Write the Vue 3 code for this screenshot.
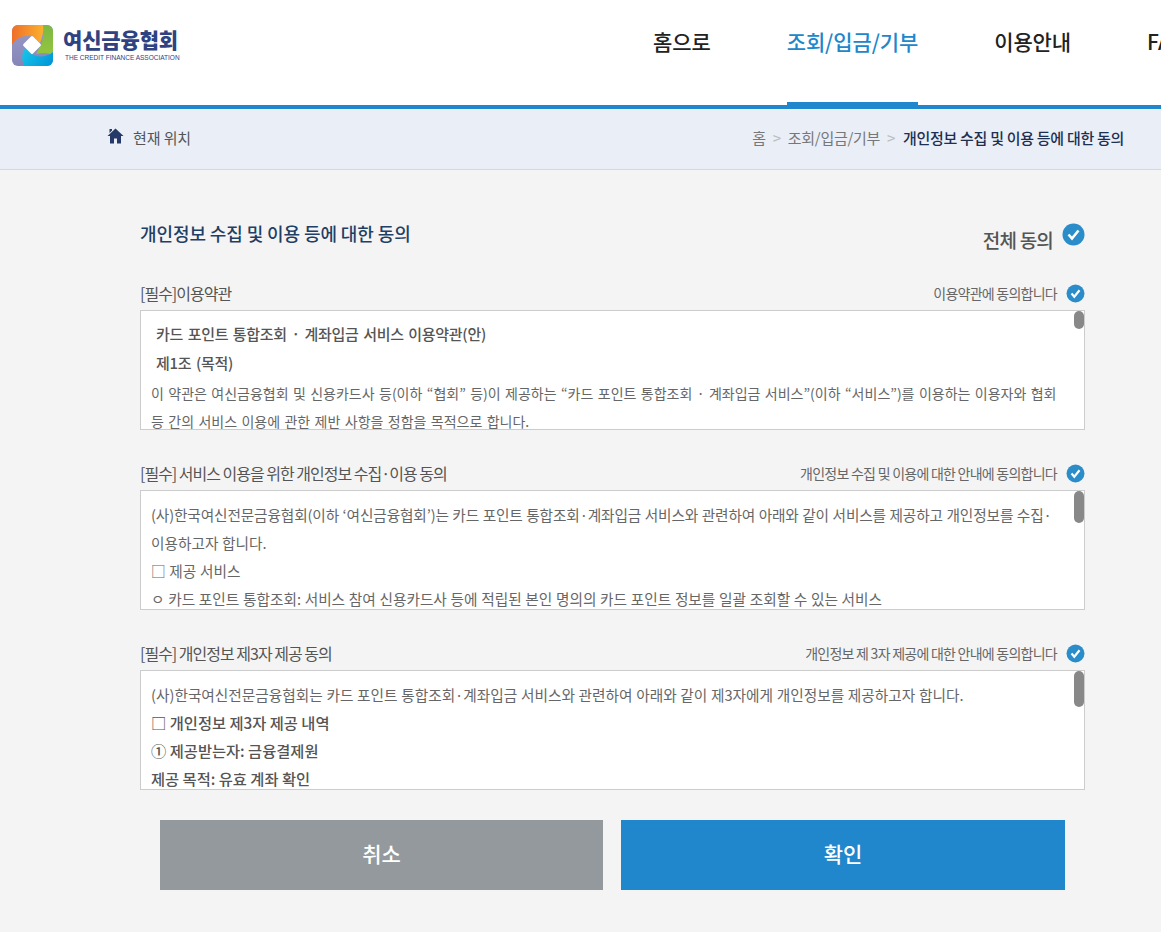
<script setup>
const sections = [
  {
    title: '[필수]이용약관',
    agree: '이용약관에 동의합니다',
    thumb: 18,
    lines: [
      { text: '카드 포인트 통합조회 · 계좌입금 서비스 이용약관(안)', kind: 'head' },
      { text: '제1조 (목적)', kind: 'head' },
      { text: '이 약관은 여신금융협회 및 신용카드사 등(이하 “협회” 등)이 제공하는 “카드 포인트 통합조회 · 계좌입금 서비스”(이하 “서비스”)를 이용하는 이용자와 협회', kind: 'terms' },
      { text: '등 간의 서비스 이용에 관한 제반 사항을 정함을 목적으로 합니다.', kind: 'terms' }
    ]
  },
  {
    title: '[필수] 서비스 이용을 위한 개인정보 수집·이용 동의',
    agree: '개인정보 수집 및 이용에 대한 안내에 동의합니다',
    thumb: 32,
    lines: [
      { text: '(사)한국여신전문금융협회(이하 ‘여신금융협회’)는 카드 포인트 통합조회·계좌입금 서비스와 관련하여 아래와 같이 서비스를 제공하고 개인정보를 수집·', kind: 'body tight' },
      { text: '이용하고자 합니다.', kind: 'body' },
      { text: '□ 제공 서비스', kind: 'body' },
      { text: 'ㅇ 카드 포인트 통합조회: 서비스 참여 신용카드사 등에 적립된 본인 명의의 카드 포인트 정보를 일괄 조회할 수 있는 서비스', kind: 'body' }
    ]
  },
  {
    title: '[필수] 개인정보 제3자 제공 동의',
    agree: '개인정보 제 3자 제공에 대한 안내에 동의합니다',
    thumb: 36,
    lines: [
      { text: '(사)한국여신전문금융협회는 카드 포인트 통합조회·계좌입금 서비스와 관련하여 아래와 같이 제3자에게 개인정보를 제공하고자 합니다.', kind: 'body' },
      { text: '□ 개인정보 제3자 제공 내역', kind: 'bold' },
      { text: '① 제공받는자: 금융결제원', kind: 'bold' },
      { text: '제공 목적: 유효 계좌 확인', kind: 'bold' }
    ]
  }
]
</script>

<template>
  <div class="page">
    <header class="header">
      <div class="logo">
        <svg class="mark" width="41" height="41" viewBox="0 0 41 41">
          <defs>
            <clipPath id="rr"><rect width="41" height="41" rx="6" /></clipPath>
            <linearGradient id="og" x1="0" y1="0.5" x2="1" y2="0.5">
              <stop offset="0" stop-color="#ee6f2a" />
              <stop offset="1" stop-color="#fbb02e" />
            </linearGradient>
            <linearGradient id="bl" x1="0" y1="0.3" x2="1" y2="0.8">
              <stop offset="0" stop-color="#17c3e8" />
              <stop offset="1" stop-color="#0097d8" />
            </linearGradient>
            <linearGradient id="gr" x1="0.5" y1="0" x2="0.5" y2="1">
              <stop offset="0" stop-color="#7cb844" />
              <stop offset="1" stop-color="#96c63e" />
            </linearGradient>
            <linearGradient id="pu" x1="0.5" y1="0" x2="0.5" y2="1">
              <stop offset="0" stop-color="#9a9ac8" />
              <stop offset="1" stop-color="#8585b8" />
            </linearGradient>
          </defs>
          <g clip-path="url(#rr)">
            <rect width="41" height="41" fill="url(#pu)" />
            <path d="M30 0H41V31C36 27 30 28 24 29L29 20C32 12 32 5 30 0Z" fill="url(#gr)" />
            <path d="M0 0H31C32 6 30 13 28 18L20 11C12 10 4 13 0 20Z" fill="url(#og)" />
            <path d="M12 41C9 33 10 27 14 22L20 29C26 33 35 32 41 27V41Z" fill="url(#bl)" />
            <path d="M20 11Q20.500 11 21 11.500L28.500 19Q29.500 20 28.500 21L21 28.500Q20 29.500 19 28.500L11.500 21Q10.500 20 11.500 19L19 11.500Q19.500 11 20 11Z" fill="#fff" />
          </g>
        </svg>
        <div class="logo-text">
          <span class="logo-ko">여신금융협회</span>
          <span class="logo-en">THE CREDIT FINANCE ASSOCIATION</span>
        </div>
      </div>
      <nav class="nav">
        <a class="nav-item">홈으로</a>
        <a class="nav-item active">조회/입금/기부</a>
        <a class="nav-item">이용안내</a>
        <a class="nav-item">FAQ</a>
      </nav>
    </header>

    <div class="crumbs">
      <div class="here">
        <svg class="home" width="17" height="16" viewBox="0 0 17 16">
          <path d="M8.500 0.500L0.500 8H3V15.500H7V10.500H10V15.500H14V8H16.500L8.500 0.500ZM2.500 1H5V2.500L2.500 5Z" fill="#253a68" />
        </svg>
        <span>현재 위치</span>
      </div>
      <div class="trail">
        <span>홈</span><i>&gt;</i><span>조회/입금/기부</span><i>&gt;</i><b>개인정보 수집 및 이용 등에 대한 동의</b>
      </div>
    </div>

    <main class="main">
      <div class="top">
        <h1>개인정보 수집 및 이용 등에 대한 동의</h1>
        <div class="all">
          <span>전체 동의</span>
          <svg class="big-check" width="23" height="23" viewBox="0 0 23 23">
            <circle cx="11.500" cy="11.500" r="11" fill="#2a8dc9" />
            <path d="M6.500 11.500L10 15.500L16.500 7.500" fill="none" stroke="#fff" stroke-width="2.600" />
          </svg>
        </div>
      </div>

      <section v-for="s in sections" :key="s.title" class="section">
        <div class="row">
          <h2>{{ s.title }}</h2>
          <div class="agree">
            <span>{{ s.agree }}</span>
            <svg width="19" height="19" viewBox="0 0 19 19">
              <circle cx="9.500" cy="9.500" r="9" fill="#2a8dc9" />
              <path d="M5.500 9.500L8.300 12.700L13.500 6.300" fill="none" stroke="#fff" stroke-width="2.200" />
            </svg>
          </div>
        </div>
        <div class="box">
          <p v-for="l in s.lines" :key="l.text" :class="['line', l.kind]">{{ l.text }}</p>
          <span class="thumb" :style="{ height: s.thumb + 'px' }"></span>
        </div>
      </section>

      <div class="buttons">
        <button class="btn cancel">취소</button>
        <button class="btn ok">확인</button>
      </div>
    </main>
  </div>
</template>

<style>
html, body { margin: 0; overflow: hidden; background: #f4f4f4; }
</style>

<style scoped>
.page { width: 1161px; height: 932px; overflow: hidden; font-family: "Noto Sans CJK KR", "Noto Sans", sans-serif; background: #f4f4f4; color: #555; }
.header { height: 105px; background: #fff; border-bottom: 4px solid #2087cc; display: flex; }
.logo { width: 653px; flex: none; display: flex; align-items: flex-start; padding: 25px 0 0 12px; box-sizing: border-box; }
.mark { flex: none; }
.logo-text { display: flex; flex-direction: column; margin-left: 10px; margin-top: 1px; }
.logo-ko { font-size: 21px; font-weight: 900; line-height: 27px; letter-spacing: -0.150px; color: #2f4282; }
.logo-en { font-size: 6.500px; font-weight: 400; line-height: 9px; margin-left: 2px; color: #2f4282; font-family: "Liberation Sans", sans-serif; white-space: nowrap; }
.nav { display: flex; gap: 76px; flex: none; }
.nav-item { height: 105px; box-sizing: border-box; padding-top: 25px; font-size: 21px; line-height: 32px; letter-spacing: -0.1px; font-weight: 500; color: #222; white-space: nowrap; position: relative; }
.nav-item.active { color: #2087cc; }
.nav-item.active::after { content: ""; position: absolute; left: 0; right: 0; bottom: 0; height: 3px; background: #2087cc; }
.crumbs { height: 61px; box-sizing: border-box; border-bottom: 1px solid #d4d9e0; background: #e9eef7; display: flex; align-items: center; justify-content: space-between; padding: 0 37px 4px 107px; font-size: 15px; letter-spacing: -0.1px; color: #555; }
.here { display: flex; align-items: center; gap: 9px; }
.home { margin-top: -3px; }
.trail { display: flex; align-items: center; color: #777; letter-spacing: -0.3px; }
.trail i { font-style: normal; color: #bbb; margin: 0 7px; }
.trail b { font-weight: 500; color: #1e2f50; margin-left: 1px; }
.main { padding: 0 76px 0 140px; }
.top { display: flex; justify-content: space-between; height: 111px; box-sizing: border-box; padding-top: 49px; }
h1 { margin: 0; font-size: 18px; line-height: 28px; font-weight: 500; letter-spacing: -0.1px; color: #1f3f66; }
.all { display: flex; align-items: flex-start; gap: 9px; font-size: 19px; letter-spacing: -0.8px; color: #555; line-height: 28px; font-weight: 500; }
.all span { margin-top: 7px; }
.big-check { margin-top: 4px; }
.section + .section { margin-top: 31px; }
.row { display: flex; justify-content: space-between; align-items: center; height: 29px; box-sizing: border-box; padding-bottom: 5px; }
h2 { margin: 0; font-size: 16px; font-weight: 400; letter-spacing: -1px; color: #555; }
.agree { display: flex; align-items: center; gap: 9px; font-size: 14px; letter-spacing: -0.750px; color: #666; }
.box { position: relative; height: 120px; box-sizing: border-box; border: 1px solid #ccc; background: #fff; overflow: hidden; padding: 10px 10px 0; }
.line { margin: 0; line-height: 28px; color: #666; white-space: nowrap; }
.line.terms { font-size: 14px; word-spacing: 1.250px; }
.line.body { font-size: 14.670px; word-spacing: 0.400px; }
.line.tight { letter-spacing: -0.130px; }
.line.head { font-weight: 500; color: #555; padding-left: 5px; font-size: 15px; letter-spacing: -0.3px; word-spacing: 1.600px; }
.line.head:first-child { margin-top: -1px; }
.line.head + .line.head { margin-top: 1px; }
.line.head + .line.terms { margin-top: 2px; }
.line.bold { font-weight: 500; color: #555; font-size: 15.300px; }
.line.body + .line.bold { margin-top: -1px; }
.thumb { position: absolute; top: 0; right: 0; width: 10px; border-radius: 5px; background: #888; }
.buttons { display: flex; gap: 18px; padding: 30px 20px 0; }
.btn { width: 443px; height: 70px; padding: 0 0 4px; border: 0; color: #fff; font: 500 21px "Noto Sans CJK KR", sans-serif; }
.btn.cancel { background: #94999d; }
.btn.ok { background: #2087cc; width: 444px; }
</style>
